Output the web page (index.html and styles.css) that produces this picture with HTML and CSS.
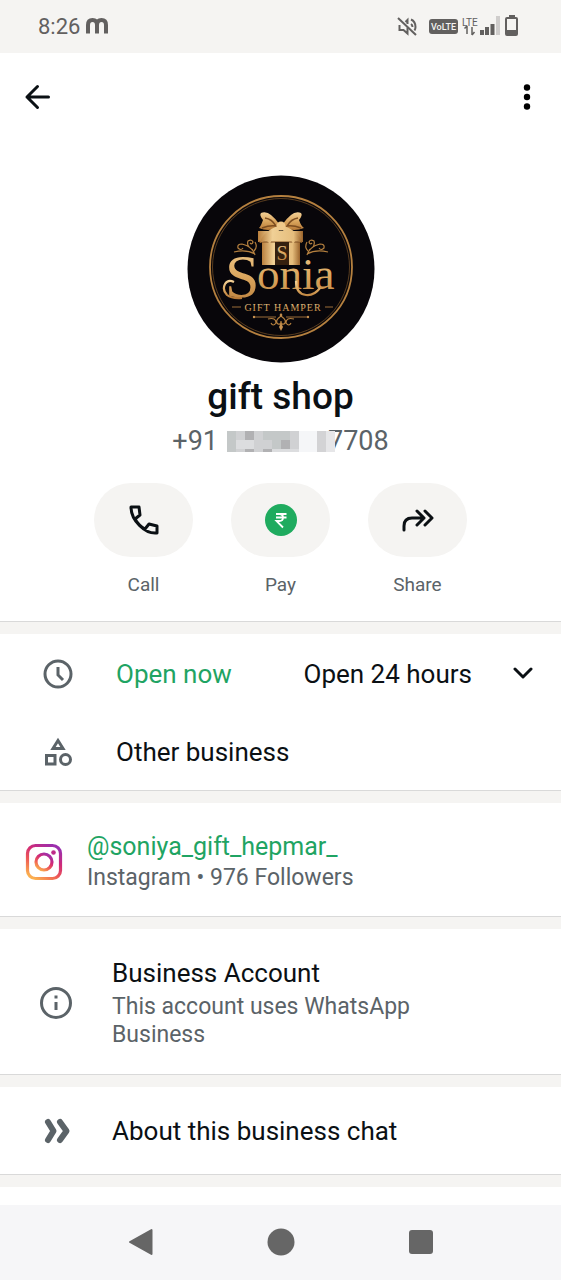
FILE: index.html
```html
<!DOCTYPE html>
<html lang="en">
  <head>
    <meta charset="UTF-8" />
    <meta name="viewport" content="width=device-width, initial-scale=1.0" />
    <title>gift shop</title>
    <link rel="stylesheet" href="styles.css" />
  </head>
  <body>
    <div class="status-bar">
      <span class="clock">8:26</span>
      <svg class="m-icon" width="22" height="17" viewBox="0 0 22 17">
        <path d="M2 15.500V7Q2 2 6.500 2T11 7V15.500M11 7Q11 2 15.500 2T20 7V15.500" />
      </svg>
      <svg class="status-icons" width="122" height="24" viewBox="0 0 122 24">
        <g fill="none" stroke="#62605f" stroke-width="2">
          <path d="M1 3l18 17" />
          <path d="M2.500 10v5h4l4 3.500v-6M8.500 7l2-2v4" />
          <path d="M14 4.500q4.500 2 4.500 7.500q0 2-1 3.500M14 9q1.500 1 1.500 3" />
        </g>
        <rect x="32" y="4" width="29" height="15" rx="3" fill="#62605f" />
        <text class="volte" x="34" y="15">VoLTE</text>
        <text class="lte" x="65" y="11">LTE</text>
        <path d="M70 11v8M67.500 13.500L70 11M75 20v-8M77.500 17L75 20" fill="none" stroke="#62605f" stroke-width="1.500" />
        <g fill="#62605f">
          <path d="M83 15h4v5h-4zM88 12h4v8h-4zM93.500 9h4v11h-4z" />
          <path d="M99 1h4v19h-4z" fill="#cfcdcc" />
          <path d="M112 0h6v3h-6z" />
          <path d="M110 15h10v5h-10z" />
        </g>
        <rect x="109" y="3" width="11" height="17" rx="1" fill="none" stroke="#62605f" stroke-width="2" />
      </svg>
    </div>

    <main>
      <section class="card hero">
        <header class="toolbar">
          <button class="icon-btn" aria-label="Back">
            <svg width="26" height="26" viewBox="0 0 26 26">
              <path class="line" d="M24.500 13H3M13.500 2.500L3 13l10.500 10.500" />
            </svg>
          </button>
          <button class="icon-btn" aria-label="More options">
            <svg width="26" height="26" viewBox="0 0 26 26">
              <circle cx="14" cy="3.500" r="3.200" />
              <circle cx="14" cy="13" r="3.200" />
              <circle cx="14" cy="22.500" r="3.200" />
            </svg>
          </button>
        </header>

        <svg class="avatar" width="188" height="188" viewBox="0 0 188 188" role="img" aria-label="Sonia Gift Hamper">
          <defs>
            <linearGradient id="gold" x1="0" y1="0" x2="0" y2="1">
              <stop offset="0" stop-color="#f3d096" />
              <stop offset="0.500" stop-color="#dba75f" />
              <stop offset="1" stop-color="#b67836" />
            </linearGradient>
            <linearGradient id="box" x1="0" y1="0" x2="1" y2="0">
              <stop offset="0" stop-color="#b97f3d" />
              <stop offset="0.300" stop-color="#f0d096" />
              <stop offset="0.800" stop-color="#e5bd7c" />
              <stop offset="1" stop-color="#9a632b" />
            </linearGradient>
          </defs>
          <circle cx="94" cy="94" r="93.500" fill="#08060a" />
          <circle cx="94" cy="92" r="71" fill="none" stroke="#b5803f" stroke-width="1.800" />
          <circle cx="94" cy="92" r="68.500" fill="none" stroke="#6d4a25" stroke-width="0.800" />
          <!-- gift box -->
          <path d="M75 61h38v29h-38z" fill="url(#box)" />
          <path d="M71 56h45v11h-45z" fill="url(#box)" />
          <path d="M72 67h43" stroke="#7c4d20" />
          <path d="M88 67h14v23h-14z" fill="#35200f" />
          <text class="box-letter" x="95" y="85">S</text>
          <path d="M93 50Q82 34 74 38Q72 40 76 45Q74 51 72 53Q83 58 93 51zM95 50Q106 34 114 38Q116 40 112 45Q114 51 117 53Q105 58 95 51z" fill="url(#gold)" />
          <path d="M91 51Q75 57 73 68L79 65L83 69Q86 59 94 54Q102 59 106 69L109 65L115 68Q113 57 97 51z" fill="url(#box)" />
          <path d="M75 53q8-3 14-2q-4-7-11-8M114 53q-8-3-14-2q4-7 11-8" fill="none" stroke="#7c4d20" stroke-width="1.500" />
          <circle cx="94" cy="51" r="4.500" fill="#efc98a" />
          <!-- scrolls beside the box -->
          <g id="scroll" class="scroll">
            <path d="M68 80q-3-9-13-11q-5 0-4 4q3 3 5 0M68 79q-9-5-21-2M66 75q-7-4-5-9q4-2 5 1q-1 3-3 1M67 76q4-4 1-9" />
          </g>
          <use href="#scroll" transform="translate(188 0) scale(-1 1)" />
          <!-- name -->
          <text class="logo-name" x="38" y="122"><tspan class="logo-s">S</tspan><tspan x="70" y="114">onia</tspan></text>
          <path d="M47 107q-6-3-9 2q-3 6 2 11q5 4 15 3M109 106q0 13 10 14q8 1 14-7" fill="none" stroke="url(#gold)" stroke-width="2.200" />
          <text class="logo-sub" x="96" y="136">GIFT HAMPER</text>
          <path d="M45 132h9M138 132h8M67 142h22M99 142h22" stroke="#9b6c38" />
          <g class="scroll">
            <path d="M81 144q8-2 8 4q-3 4-5 0M107 144q-8-2-8 4q3 4 5 0M94 141q-7 5-3 8q3 1 3-3q0 4 3 3q4-3-3-8M94 149v4" />
          </g>
          <path d="M94 148l2 4l-2 4l-2-4zM94 138l1.500 2l-1.500 2l-1.500-2z" fill="#c89250" />
          <circle cx="67" cy="142" r="1.200" fill="#c89250" />
          <circle cx="121" cy="142" r="1.200" fill="#c89250" />
        </svg>

        <h1 class="name">gift shop</h1>
        <p class="phone">
          <span>+91</span>
          <svg class="mosaic" width="108" height="21" viewBox="0 0 108 21" aria-label="hidden digits" shape-rendering="crispEdges">
            <path fill="#d0d1d3" d="M0 0h72v21h-72z" />
            <path fill="#c4c8c8" d="M0 0h9v21h-9zM36 0h18v9h-18zM45 9h9v9h-9zM54 0h9v9h-9z" />
            <path fill="#dcdddf" d="M9 9h18v9h-18zM45 18h27v3h-27z" />
            <path fill="#b1b1b3" d="M18 0h9v9h-9zM18 18h9v3h-9zM36 18h9v3h-9zM54 9h9v9h-9z" />
            <path fill="#f5f6f8" d="M72 0h18v21h-18z" />
            <path fill="#d3d3d5" d="M90 0h9v21h-9z" />
            <path fill="#e6e6e8" d="M99 0h9v21h-9z" />
          </svg>
          <span>7708</span>
        </p>

        <div class="actions">
          <button class="action">
            <span class="pill">
              <svg width="32" height="32" viewBox="0 0 32 32">
                <path class="line" d="M3 3h8l1 8l-5 4q4 7 10 10l4-5l8 2v7Q20 30 11.500 21.500T3 3z" />
              </svg>
            </span>
            Call
          </button>
          <button class="action">
            <span class="pill">
              <svg width="32" height="32" viewBox="0 0 32 32">
                <circle cx="16" cy="16" r="16" fill="#1fab5f" />
                <path d="M11 10h10.500M11 13.500h10.500M11.500 10h3q3.500 0 3.500 3.500t-3.500 3.500h-3l6.500 6.500" fill="none" stroke="#fff" stroke-width="1.800" />
              </svg>
            </span>
            Pay
          </button>
          <button class="action">
            <span class="pill">
              <svg width="32" height="32" viewBox="0 0 32 32">
                <path class="line" d="M2 26v-4q0-8 8-8h12M15 7l7 7l-7 7M23 7l7 7l-7 7" />
              </svg>
            </span>
            Share
          </button>
        </div>
      </section>

      <section class="card details">
        <div class="row">
          <svg class="row-icon" width="30" height="30" viewBox="0 0 30 30">
            <circle cx="15" cy="15" r="13" />
            <path d="M15 8v8l5 5" />
          </svg>
          <span class="open">Open now</span>
          <button class="hours">
            Open 24 hours
            <svg width="20" height="20" viewBox="0 0 20 20">
              <path class="line" d="M2 5l8 8l8-8" />
            </svg>
          </button>
        </div>
        <div class="row">
          <svg class="row-icon" width="30" height="30" viewBox="0 0 30 30">
            <path d="M15 3.500l-5 8h10z" />
            <path d="M3.500 18.500h8.500v8.500h-8.500z" />
            <circle cx="22.500" cy="22.500" r="5" />
          </svg>
          <span>Other business</span>
        </div>
      </section>

      <section class="card social">
        <svg width="38" height="38" viewBox="0 0 38 38">
          <defs>
            <linearGradient id="insta" x1="0.200" y1="1" x2="0.800" y2="0">
              <stop offset="0" stop-color="#fbb04f" />
              <stop offset="0.350" stop-color="#ee5a55" />
              <stop offset="0.650" stop-color="#d02a78" />
              <stop offset="1" stop-color="#9a2fae" />
            </linearGradient>
          </defs>
          <g fill="none" stroke="url(#insta)" stroke-width="3.200">
            <rect x="2.500" y="2.500" width="33" height="33" rx="8" />
            <circle cx="19" cy="19" r="8" />
          </g>
          <circle cx="28.500" cy="9.500" r="2.300" fill="#bd2b88" />
        </svg>
        <div>
          <a class="handle" href="#">@soniya_gift_hepmar_</a>
          <p class="sub">Instagram • 976 Followers</p>
        </div>
      </section>

      <section class="card account">
        <svg class="row-icon" width="32" height="32" viewBox="0 0 32 32">
          <circle cx="16" cy="16" r="14.500" />
          <path d="M16 15v8M16 8.500v3" />
        </svg>
        <div>
          <h2 class="title">Business Account</h2>
          <p class="note">This account uses WhatsApp Business</p>
        </div>
      </section>

      <section class="card about">
        <svg class="chevrons" width="32" height="32" viewBox="0 0 32 32">
          <path d="M8 7l5.500 9l-5.500 9M20 7l6.500 9l-6.500 9" />
        </svg>
        <h2 class="title">About this business chat</h2>
      </section>
    </main>

    <nav class="nav-bar">
      <button class="nav-btn" aria-label="Back">
        <svg width="28" height="28" viewBox="0 0 28 28">
          <path d="M24.500 2v24L3 14z" stroke="#666" stroke-width="2" stroke-linejoin="round" />
        </svg>
      </button>
      <button class="nav-btn" aria-label="Home">
        <svg width="28" height="28" viewBox="0 0 28 28"><circle cx="14" cy="14" r="13.500" /></svg>
      </button>
      <button class="nav-btn" aria-label="Recent apps">
        <svg width="28" height="28" viewBox="0 0 28 28"><rect x="2" y="2" width="24" height="24" rx="3" /></svg>
      </button>
    </nav>
  </body>
</html>
```
FILE: styles.css
```css
* {
  box-sizing: border-box;
}
body {
  display: flex;
  flex-direction: column;
  min-height: 100vh;
  margin: 0;
  background-color: #fff;
  color: #0b1014;
  font-family: Roboto, 'Liberation Sans', sans-serif;
  font-size: 26px;
  line-height: 32px;
}
h1,
h2,
p {
  margin: 0;
  font-weight: 400;
}
button {
  padding: 0;
  border: none;
  background: none;
  color: inherit;
  font: inherit;
}
svg {
  flex: none;
}
main {
  flex: 1;
}
.line {
  fill: none;
  stroke: #0b1014;
  stroke-width: 3;
  stroke-linecap: round;
  stroke-linejoin: round;
}

/* status bar */
.status-bar {
  display: flex;
  align-items: center;
  gap: 6px;
  height: 53px;
  padding: 0 42px 0 38px;
  background-color: #f5f4f2;
  color: #62605f;
}
.clock {
  font-size: 22px;
}
.m-icon {
  fill: none;
  stroke: #62605f;
  stroke-width: 4;
}
.status-icons {
  margin-left: auto;
}
.volte {
  fill: #f5f4f2;
  font-size: 9px;
  font-weight: 500;
}
.lte {
  fill: #62605f;
  font-size: 10px;
}

/* cards with the grey band under them */
.card {
  border-bottom: 12px solid #f5f4f2;
  box-shadow: inset 0 -1px #d9d9d9;
}
.hero {
  display: flex;
  flex-direction: column;
  align-items: center;
  padding-bottom: 25px;
}
.toolbar {
  display: flex;
  justify-content: space-between;
  align-self: stretch;
  padding: 31px 22px 0 24px;
}
.icon-btn {
  display: flex;
}
.avatar {
  margin-top: 65px;
}
.name {
  margin-top: 13px;
  font-size: 37px;
  font-weight: 500;
  line-height: 42px;
}
.phone {
  display: flex;
  align-items: center;
  margin-top: 7px;
  color: #5b6368;
  font-size: 27px;
}
.mosaic {
  margin: 0 -7px 0 9px;
  z-index: 1;
}
.actions {
  display: flex;
  gap: 38px;
  margin-top: 26px;
}
.action {
  display: flex;
  flex-direction: column;
  gap: 16px;
  align-items: center;
  color: #5b6368;
  font-size: 19px;
  line-height: 24px;
}
.pill {
  display: flex;
  align-items: center;
  justify-content: center;
  width: 99px;
  height: 74px;
  border-radius: 37px;
  background-color: #f5f4f2;
}

/* opening hours and category */
.row-icon {
  fill: none;
  stroke: #5b6368;
  stroke-width: 3;
}
.details {
  display: flex;
  flex-direction: column;
  gap: 46px;
  padding: 24px 28px 23px 43px;
}
.row {
  display: flex;
  align-items: center;
}
.row .row-icon {
  margin-right: 43px;
}
.open,
.handle {
  color: #1fa463;
}
.hours {
  display: flex;
  gap: 41px;
  align-items: center;
  margin-left: auto;
}

.social {
  display: flex;
  gap: 24px;
  align-items: center;
  padding: 28px 25px 24px;
}
.handle {
  display: block;
  font-size: 25px;
  text-decoration: none;
}
.sub {
  color: #5b6368;
  font-size: 23px;
  line-height: 30px;
}

.account,
.about {
  display: flex;
  gap: 40px;
  align-items: center;
  padding: 28px 100px 26px 40px;
}
.about {
  padding-bottom: 28px;
}
.note {
  margin-top: 4px;
  color: #5b6368;
  font-size: 23px;
  line-height: 28px;
}
.title {
  font-size: 26px;
}
.chevrons {
  fill: none;
  stroke: #5b6368;
  stroke-width: 6;
  stroke-linecap: round;
  stroke-linejoin: round;
}

/* system navigation */
.nav-bar {
  display: flex;
  justify-content: center;
  gap: 112px;
  padding: 23px 0 24px;
  background-color: #f6f6f8;
}
.nav-btn {
  display: flex;
}
.nav-btn svg {
  fill: #666;
}

/* logo */
.logo-name,
.logo-sub,
.box-letter {
  fill: url(#gold);
  font-family: 'Liberation Serif', serif;
}
.logo-name {
  font-size: 45px;
}
.logo-s {
  font-size: 62px;
}
.logo-sub {
  font-size: 10px;
  letter-spacing: 1px;
  text-anchor: middle;
}
.box-letter {
  font-size: 20px;
  text-anchor: middle;
}
.scroll {
  fill: none;
  stroke: #b5803f;
  stroke-width: 1.2;
}
```
